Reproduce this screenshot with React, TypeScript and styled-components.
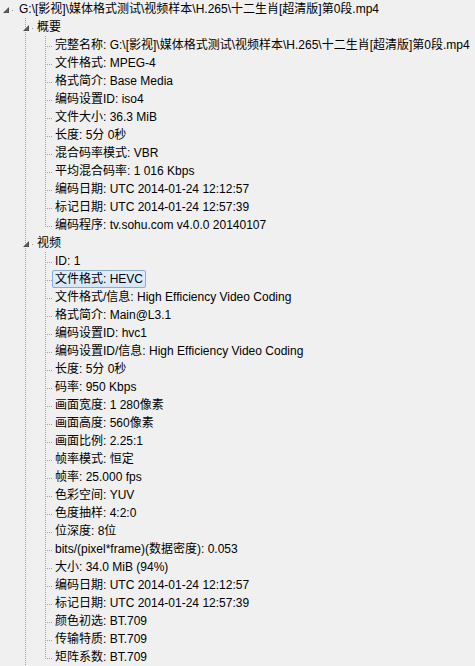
import React from "react";
import styled, { createGlobalStyle } from "styled-components";

const GlobalStyle = createGlobalStyle`
  html, body {
    margin: 0;
    padding: 0;
    background: #f0f0f0;
  }
  body {
    font-family: "Liberation Sans", "Noto Sans CJK SC", sans-serif;
    font-size: 12px;
    color: #000;
  }
`;

const LINE = "#a0a0a0";
const ROW_H = 18;
const MID = 10;

type Node = { label: string; children?: Node[]; selected?: boolean };

const fileName = String.raw`G:\[影视]\媒体格式测试\视频样本\H.265\十二生肖[超清版]第0段.mp4`;

const tree: Node = {
  label: fileName,
  children: [
    {
      label: "概要",
      children: [
        { label: `完整名称: ${fileName}` },
        { label: "文件格式: MPEG-4" },
        { label: "格式简介: Base Media" },
        { label: "编码设置ID: iso4" },
        { label: "文件大小: 36.3 MiB" },
        { label: "长度: 5分 0秒" },
        { label: "混合码率模式: VBR" },
        { label: "平均混合码率: 1 016 Kbps" },
        { label: "编码日期: UTC 2014-01-24 12:12:57" },
        { label: "标记日期: UTC 2014-01-24 12:57:39" },
        { label: "编码程序: tv.sohu.com v4.0.0 20140107" },
      ],
    },
    {
      label: "视频",
      children: [
        { label: "ID: 1" },
        { label: "文件格式: HEVC", selected: true },
        { label: "文件格式/信息: High Efficiency Video Coding" },
        { label: "格式简介: Main@L3.1" },
        { label: "编码设置ID: hvc1" },
        { label: "编码设置ID/信息: High Efficiency Video Coding" },
        { label: "长度: 5分 0秒" },
        { label: "码率: 950 Kbps" },
        { label: "画面宽度: 1 280像素" },
        { label: "画面高度: 560像素" },
        { label: "画面比例: 2.25:1" },
        { label: "帧率模式: 恒定" },
        { label: "帧率: 25.000 fps" },
        { label: "色彩空间: YUV" },
        { label: "色度抽样: 4:2:0" },
        { label: "位深度: 8位" },
        { label: "bits/(pixel*frame)(数据密度): 0.053" },
        { label: "大小: 34.0 MiB (94%)" },
        { label: "编码日期: UTC 2014-01-24 12:12:57" },
        { label: "标记日期: UTC 2014-01-24 12:57:39" },
        { label: "颜色初选: BT.709" },
        { label: "传输特质: BT.709" },
        { label: "矩阵系数: BT.709" },
      ],
    },
  ],
};

/* column geometry per depth: width, x of vertical guide, triangle left */
const COLS = [
  { w: 16, x: 6, tri: 3 },
  { w: 18, x: 9, tri: 7 },
  { w: 18, x: 11, tri: 9 },
];

const vDots = `repeating-linear-gradient(to bottom, ${LINE} 0 1px, transparent 1px 2px)`;
const hDots = `repeating-linear-gradient(to right, ${LINE} 0 1px, transparent 1px 2px)`;

type CellProps = {
  $w: number;
  $x: number;
  $top?: boolean;
  $bottom?: boolean;
  $hFrom?: number;
  $hTo?: number;
};

function layers(p: CellProps): string {
  const out: string[] = [];
  if (p.$top && p.$bottom) {
    out.push(`${vDots} ${p.$x}px 0 / 1px ${ROW_H}px no-repeat`);
  } else if (p.$top) {
    out.push(`${vDots} ${p.$x}px 0 / 1px ${MID + 1}px no-repeat`);
  } else if (p.$bottom) {
    out.push(`${vDots} ${p.$x}px ${MID}px / 1px ${ROW_H - MID}px no-repeat`);
  }
  if (p.$hFrom !== undefined && p.$hTo !== undefined) {
    out.push(
      `${hDots} ${p.$hFrom}px ${MID}px / ${p.$hTo - p.$hFrom}px 1px no-repeat`
    );
  }
  return out.length ? out.join(", ") : "none";
}

const Page = styled.div`
  height: 666px;
  overflow: hidden;
  background: #f0f0f0;
  padding: 0;
`;

const TreeList = styled.div`
  display: flex;
  flex-direction: column;
`;

const Row = styled.div`
  display: flex;
  align-items: stretch;
  height: ${ROW_H}px;
  white-space: nowrap;
`;

const Cell = styled.div<CellProps>`
  flex: none;
  width: ${(p) => p.$w}px;
  height: ${ROW_H}px;
  display: flex;
  align-items: flex-start;
  background: ${(p) => layers(p)};
`;

const Expander = styled.svg<{ $left: number }>`
  flex: none;
  display: block;
  margin-left: ${(p) => p.$left}px;
  margin-top: 7px;
  width: 6px;
  height: 6px;
`;

const Label = styled.span<{ $selected?: boolean }>`
  box-sizing: border-box;
  height: ${ROW_H}px;
  line-height: 16px;
  padding: 0 2px;
  border: 1px solid ${(p) => (p.$selected ? "#84acdd" : "transparent")};
  border-radius: 2px;
  background: ${(p) =>
    p.$selected ? "linear-gradient(to bottom, #e4effc, #d6e6fa)" : "transparent"};
  color: #000;
`;

const Triangle: React.FC<{ left: number }> = ({ left }) => (
  <Expander $left={left} viewBox="0 0 6 6">
    <polygon points="6,0 6,6 0,6" fill="#4a4a4a" />
    <polygon points="5.2,1.6 5.2,5.2 1.6,5.2" fill="#606060" />
  </Expander>
);

type FlatRow = {
  node: Node;
  depth: number;
  // for each ancestor depth k < depth: whether to draw continuing vertical line
  guides: boolean[];
  isLast: boolean;
  hasSiblings: boolean;
};

function flatten(node: Node): FlatRow[] {
  const rows: FlatRow[] = [];
  const walk = (n: Node, depth: number, guides: boolean[], isLast: boolean, hasSiblings: boolean) => {
    rows.push({ node: n, depth, guides, isLast, hasSiblings });
    if (n.children) {
      n.children.forEach((c, i) => {
        const last = i === n.children!.length - 1;
        // the "视频" group continues past the visible area (more streams below)
        const continues = depth === 0 ? true : !last;
        walk(c, depth + 1, [...guides, depth === 0 ? false : !isLast || hasSiblings], !continues, true);
      });
    }
  };
  walk(node, 0, [], true, false);
  return rows;
}

const rows = flatten(tree);

const TreeRow: React.FC<{ row: FlatRow }> = ({ row }) => {
  const { node, depth, guides, isLast, hasSiblings } = row;
  const col = COLS[depth];
  const expandable = !!node.children;
  const cells: React.ReactNode[] = [];

  for (let k = 0; k < depth; k++) {
    const g = COLS[k];
    // depth 0 column: single root, no line; depth 1 column: group line runs through all rows
    const draw = k === 0 ? false : true;
    cells.push(
      <Cell key={k} $w={g.w} $x={g.x} $top={draw && guides[k] !== undefined} $bottom={draw} />
    );
  }

  if (expandable) {
    cells.push(
      <Cell
        key="c"
        $w={col.w}
        $x={col.x}
        $top={hasSiblings}
        $bottom={hasSiblings}
        $hFrom={col.tri + 9}
        $hTo={col.tri + 11}
      >
        <Triangle left={col.tri} />
      </Cell>
    );
  } else {
    cells.push(
      <Cell
        key="c"
        $w={col.w}
        $x={col.x}
        $top
        $bottom={!isLast}
        $hFrom={col.x + 2}
        $hTo={col.w + 1}
      />
    );
  }

  return (
    <Row>
      {cells}
      <Label $selected={node.selected}>{node.label}</Label>
    </Row>
  );
};

export default function App() {
  return (
    <>
      <GlobalStyle />
      <Page>
        <TreeList>
          {rows.map((r, i) => (
            <TreeRow key={i} row={r} />
          ))}
        </TreeList>
      </Page>
    </>
  );
}
